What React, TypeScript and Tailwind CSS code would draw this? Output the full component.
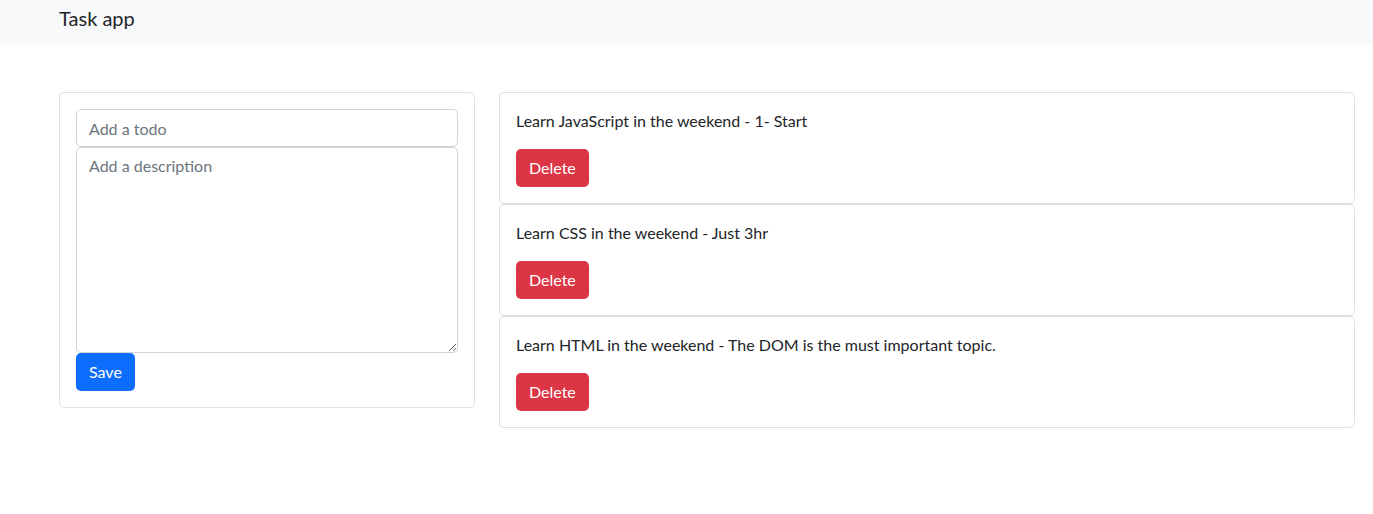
const todos = [
  { id: 1, text: "Learn JavaScript in the weekend - 1- Start" },
  { id: 2, text: "Learn CSS in the weekend - Just 3hr" },
  { id: 3, text: "Learn HTML in the weekend - The DOM is the must important topic." },
];

export default function App() {
  return (
    <div className="min-h-[514px] bg-white text-[#212529] font-['Lato','Noto_Sans',sans-serif] text-base">
      <nav className="h-[44px] bg-[#f8f9fa] flex items-center px-[59px]">
        <span className="text-[20px] leading-[30px] -mt-[9px]">Task app</span>
      </nav>

      <div className="flex gap-[24px] items-start pl-[59px] pr-[18px] pt-[48px]">
        {/* form card */}
        <div className="w-[416px] shrink-0 border border-[#dfdfdf] rounded-[5px] p-4">
          <input
            type="text"
            placeholder="Add a todo"
            className="block w-full h-[38px] px-3 border border-[#ced4da] rounded-[5px] placeholder:text-[#6c757d] outline-none"
          />
          <textarea
            placeholder="Add a description"
            className="block w-full h-[206px] px-3 py-[6px] border border-[#ced4da] rounded-[5px] placeholder:text-[#6c757d] outline-none resize-y"
          />
          <button className="h-[38px] px-[13px] bg-[#0d6efd] text-white rounded-[5px]">
            Save
          </button>
        </div>

        {/* list */}
        <div className="flex-1 flex flex-col">
          {todos.map((t) => (
            <div key={t.id} className="border border-[#dfdfdf] rounded-[5px] p-4 h-[112px]">
              <p className="leading-6 mb-4">{t.text}</p>
              <button className="h-[38px] px-[13px] bg-[#dc3545] text-white rounded-[5px]">
                Delete
              </button>
            </div>
          ))}
        </div>
      </div>
    </div>
  );
}
